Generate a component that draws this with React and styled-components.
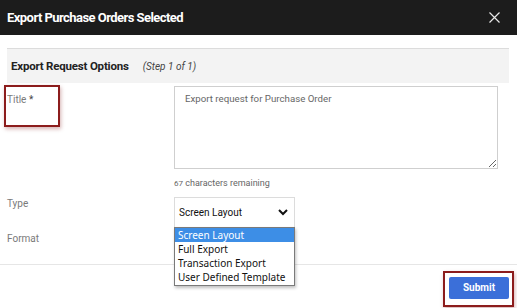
import React from 'react'
import styled, { createGlobalStyle } from 'styled-components'

const Global = createGlobalStyle`
  html, body { margin: 0; padding: 0; background: #fff; }
  body { font-family: Roboto, 'Liberation Sans', sans-serif; }
`

const options = ['Screen Layout', 'Full Export', 'Transaction Export', 'User Defined Template']

const App = () => {
  return (
    <>
      <Global />
      <Modal>
        <Header>
          <HeaderTitle>Export Purchase Orders Selected</HeaderTitle>
          <Close aria-label="close">
            <svg width="11" height="11" viewBox="0 0 11 11">
              <path d="M0.5 0.5 L10.5 10.5 M10.5 0.5 L0.5 10.5" stroke="#e8e8e8" strokeWidth="1.2" fill="none" />
            </svg>
          </Close>
        </Header>
        <Body>
          <SectionBar>
            <SectionTitle>Export Request Options</SectionTitle>
            <StepText>(Step 1 of 1)</StepText>
          </SectionBar>
          <Form>
            <Row $top={3}>
              <Highlight>
                <Label>Title <Star>*</Star></Label>
              </Highlight>
              <Field>
                <TextArea placeholder="Export request for Purchase Order" />
                <Counter><small>67</small> characters remaining</Counter>
              </Field>
            </Row>
            <Row $top={7}>
              <Label $pad={1}>Type</Label>
              <SelectWrap>
                <SelectBox>
                  <span>Screen Layout</span>
                  <svg width="10" height="7" viewBox="0 0 10 7">
                    <path d="M1 1 L5 5 L9 1" stroke="#111" strokeWidth="2" fill="none" />
                  </svg>
                </SelectBox>
                <Options>
                  {options.map((o, i) => (
                    <Option key={o} $active={i === 0}>{o}</Option>
                  ))}
                </Options>
              </SelectWrap>
            </Row>
            <Row $top={6}>
              <Label>Format</Label>
            </Row>
          </Form>
        </Body>
        <Footer>
          <Highlight $button>
            <SubmitButton>Submit</SubmitButton>
          </Highlight>
        </Footer>
      </Modal>
    </>
  )
}

export default App

const Modal = styled.div`
  width: 517px;
  height: 308px;
  display: flex;
  flex-direction: column;
  background: #fff;
  overflow: hidden;
`

const Header = styled.div`
  height: 35px;
  background: #1c1c1c;
  display: flex;
  align-items: center;
  justify-content: space-between;
  padding: 0 17px 0 7px;
  flex-shrink: 0;
`

const HeaderTitle = styled.h1`
  margin: 0;
  color: #fff;
  font-size: 13px;
  font-weight: 700;
  letter-spacing: -0.55px;
`

const Close = styled.button`
  background: none;
  border: none;
  padding: 0;
  display: flex;
  cursor: pointer;
`

const Body = styled.div`
  flex: 1;
  padding: 13px 8px 0 7px;
`

const SectionBar = styled.div`
  height: 34px;
  background: #f3f3f3;
  border-top: 1px solid #dcdcdc;
  display: flex;
  align-items: center;
  padding-left: 4px;
  gap: 14px;
`

const SectionTitle = styled.span`
  font-size: 11.5px;
  font-weight: 700;
  letter-spacing: -0.2px;
  color: #222;
`

const StepText = styled.span`
  font-size: 10px;
  font-style: italic;
  color: #444;
`

const Form = styled.div`
  display: flex;
  flex-direction: column;
`

const Row = styled.div`
  display: grid;
  grid-template-columns: 167px 324px;
  align-items: start;
  margin-top: ${p => p.$top}px;
`

const Highlight = styled.div`
  border: 2px solid #8c1c1c;
  box-shadow: 1px 2px 4px rgba(120, 0, 0, 0.3);
  width: ${p => (p.$button ? 'auto' : '51px')};
  height: ${p => (p.$button ? 'auto' : '31px')};
  padding: ${p => (p.$button ? '3px 3px 6px 4px' : '7px 0 0 1px')};
  margin: ${p => (p.$button ? '0' : '-1px 0 0 -3px')};
  justify-self: start;
`

const Label = styled.div`
  font-size: 10px;
  line-height: 12px;
  color: #7a7a7a;
  padding-top: ${p => p.$pad || 0}px;
`

const Star = styled.span`
  color: #444;
  font-size: 10px;
`

const Field = styled.div`
  display: flex;
  flex-direction: column;
`

const TextArea = styled.textarea`
  box-sizing: border-box;
  width: 324px;
  height: 83px;
  border: 1px solid #cfcfcf;
  padding: 6px 10px;
  font-family: Roboto, 'Liberation Sans', sans-serif;
  font-size: 9.7px;
  resize: vertical;
  outline: none;
  &::placeholder { color: #666; }
`

const Counter = styled.div`
  margin-top: 8px;
  font-size: 9px;
  line-height: 12px;
  color: #666;
  small { font-size: 8px; }
`

const SelectWrap = styled.div`
  position: relative;
  width: 121px;
`

const SelectBox = styled.div`
  box-sizing: border-box;
  height: 30px;
  border: 1px solid #dcdcdc;
  border-bottom: none;
  display: flex;
  align-items: center;
  justify-content: space-between;
  padding: 0 6px 0 4px;
  font-size: 10px;
  color: #111;
`

const Options = styled.ul`
  position: absolute;
  top: 100%;
  left: 0;
  width: 121px;
  box-sizing: border-box;
  margin: 0;
  padding: 0 0 1px;
  list-style: none;
  background: #fff;
  border: 1px solid #7a7a7a;
  box-shadow: 1px 2px 3px rgba(0, 0, 0, 0.25);
  z-index: 5;
`

const Option = styled.li`
  height: 14px;
  line-height: 14px;
  padding-left: 3px;
  font-family: 'Noto Sans', 'Liberation Sans', sans-serif;
  font-size: 10px;
  white-space: nowrap;
  color: ${p => (p.$active ? '#fff' : '#111')};
  background: ${p => (p.$active ? '#3d8ee6' : 'transparent')};
`

const Footer = styled.div`
  box-sizing: border-box;
  height: 44px;
  border-top: 1px solid #e6e6e6;
  display: flex;
  justify-content: flex-end;
  align-items: flex-start;
  padding: 6px 3px 0 0;
  flex-shrink: 0;
`

const SubmitButton = styled.button`
  width: 60px;
  height: 22px;
  background: #3b6fd9;
  color: #fff;
  border: none;
  border-radius: 2px;
  font-family: Roboto, 'Liberation Sans', sans-serif;
  font-size: 10px;
  font-weight: 700;
  cursor: pointer;
`
